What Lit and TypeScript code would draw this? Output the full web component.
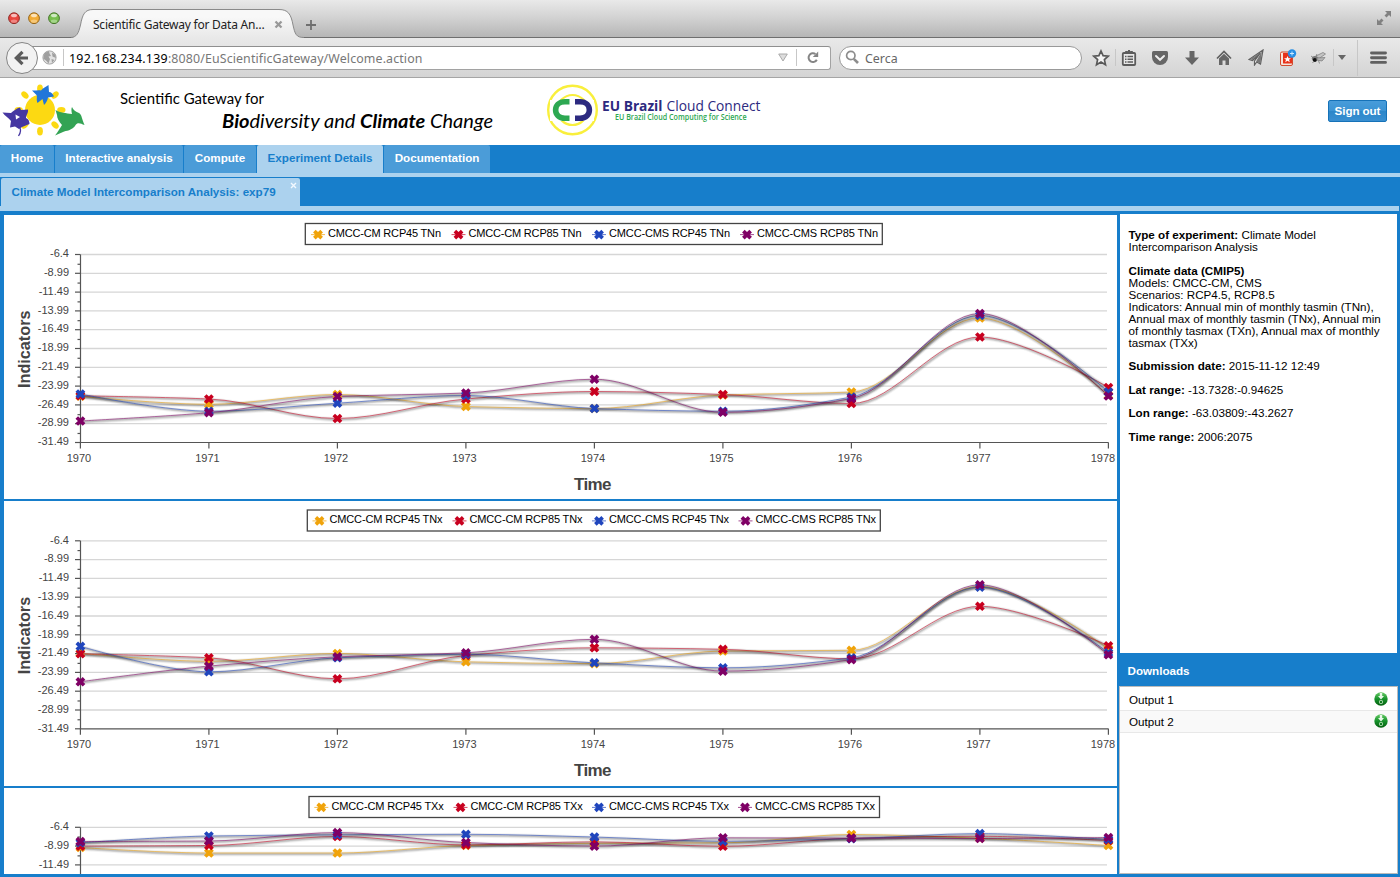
import { LitElement, html, svg, css } from "lit";
import { customElement, property } from "lit/decorators.js";

const COLORS = ["#f0a30a", "#c8001f", "#1f45bd", "#7f0065"];
const YEARS = [1970, 1971, 1972, 1973, 1974, 1975, 1976, 1977, 1978];
const TICKS = ["-6.4", "-8.99", "-11.49", "-13.99", "-16.49", "-18.99", "-21.49", "-23.99", "-26.49", "-28.99", "-31.49"];
const X0 = 76.4;
const DX = 128.5;
const DY = 18.8;
const HANDLE = 1 / 3;

interface ChartSpec {
  suffix: string;
  axisTop: number;
  legendX: number;
  legendY: number;
  legendW: number;
  height: number;
  legendItems: [number, number, number][];
  series: number[][];
}

/* Series values are offsets in pixels below the top grid line. */
const CHARTS: ChartSpec[] = [
  {
    suffix: "TNn", axisTop: 39.5, legendX: 301.3, legendY: 8.5, legendW: 577, height: 284,
    legendItems: [[314, 324, 113], [454.5, 464.5, 113], [595, 605, 121], [743, 753, 121]],
    series: [
      [141.8, 149.8, 140, 152, 154, 140.5, 137.5, 63.5, 141],
      [141.3, 144.5, 164, 144.5, 137, 140, 149, 82.5, 133],
      [139.5, 156.7, 148.7, 141, 154, 156.7, 142.5, 61, 137.5],
      [166.5, 158.2, 142, 138.5, 124.7, 157.8, 144, 59, 141.5],
    ],
  },
  {
    suffix: "TNx", axisTop: 39.8, legendX: 303.3, legendY: 9, legendW: 573, height: 285,
    legendItems: [[315.5, 325.5, 113], [455.5, 465.5, 113], [595, 605, 120], [741.5, 751.5, 120.5]],
    series: [
      [112.5, 120.5, 112.7, 121, 122.8, 110.2, 109.5, 45.7, 108],
      [113, 117, 138, 114.7, 107, 108.5, 118, 65.5, 105],
      [105.5, 131, 117, 113.5, 122, 127, 117, 46.3, 112],
      [141, 125.3, 116, 112, 98.5, 130.3, 118.8, 44, 114],
    ],
  },
  {
    suffix: "TXx", axisTop: 39.3, legendX: 305, legendY: 8.5, legendW: 570.5, height: 86,
    legendItems: [[317.3, 327.5, 112.3], [456.5, 466.5, 112.3], [595, 605, 120], [741, 751, 120]],
    series: [
      [20.2, 25.7, 25.7, 18.2, 16, 15.5, 7.2, 11, 18.2],
      [18.8, 18.2, 9.2, 17.6, 14.5, 19, 11, 9, 13.2],
      [15.5, 8.7, 7.5, 7, 9.7, 14, 11.3, 6.3, 12.2],
      [14.2, 13.7, 5.3, 15.2, 18.8, 10.5, 10.8, 11.2, 10.2],
    ],
  },
];

/* Smooth curve whose tangent is flat at every local extreme. */
function curve(values: number[], top: number): string {
  const n = values.length;
  const tangent = values.map((v, i) => {
    if (i === 0 || i === n - 1) return 0;
    const a = v - values[i - 1];
    const b = values[i + 1] - v;
    return a * b <= 0 ? 0 : (2 * a * b) / (a + b);
  });
  let d = `M${X0} ${top + values[0]}`;
  for (let i = 1; i < n; i++) {
    const xa = X0 + DX * (i - 1);
    const xb = X0 + DX * i;
    const ha = i === 1 ? 0 : HANDLE;
    const hb = i === n - 1 ? 0 : HANDLE;
    const ya = top + values[i - 1] + tangent[i - 1] * ha;
    const yb = top + values[i] - tangent[i] * hb;
    d += `C${xa + DX * ha} ${ya} ${xb - DX * hb} ${yb} ${xb} ${top + values[i]}`;
  }
  return d;
}

const marker = (x: number, y: number, color: string) =>
  svg`<path d="M${x - 2.3} ${y - 2.2}L${x + 2.3} ${y + 2.2}M${x + 2.3} ${y - 2.2}L${x - 2.3} ${y + 2.2}" stroke=${color} stroke-width="3.7" stroke-linecap="square"/>`;

@customElement("line-chart")
class LineChart extends LitElement {
  @property({ attribute: false }) spec!: ChartSpec;

  static styles = css`
    :host { display: block; overflow: hidden; background: #fff; }
    svg { display: block; }
    text { font-family: "Liberation Sans", Arial, sans-serif; font-size: 11px; }
    .tick { fill: #444; }
    .legend { fill: #000; }
    .title { fill: #444; font-size: 17px; font-weight: bold; }
    .ytitle { font-size: 16.5px; }
    .grid { stroke: #d6d6d6; stroke-width: 1.3; }
    .axis { stroke: #555; stroke-width: 1.2; fill: none; }
    .shade { stroke: #000; fill: none; }
    .line { fill: none; stroke-width: 1; opacity: 0.55; }
  `;

  render() {
    const s = this.spec;
    const t = s.axisTop;
    const bottom = t + DY * 10;
    const full = s.height > bottom;
    const ticks = TICKS.filter((_, i) => t + DY * i + 6 < s.height);
    const names = ["CMCC-CM RCP45", "CMCC-CM RCP85", "CMCC-CMS RCP45", "CMCC-CMS RCP85"];
    return html`<svg width="1113" height=${s.height} viewBox=${`0 0 1113 ${s.height}`}>
      <rect x=${s.legendX} y=${s.legendY} width=${s.legendW} height="21" fill="#fff" stroke="#444" stroke-width="1.3"/>
      ${s.legendItems.map(([mx, tx, w], i) => svg`
        <line x1=${mx - 7} x2=${mx + 7} y1=${t - 19.9} y2=${t - 19.9} stroke=${COLORS[i]} opacity="0.7"/>
        ${marker(mx, t - 19.9, COLORS[i])}
        <text class="legend" x=${tx} y=${t - 17.5} textLength=${w}>${names[i]} ${s.suffix}</text>`)}
      ${ticks.map((label, i) => svg`
        ${i < 10 ? svg`<line class="grid" x1="77" x2="1103" y1=${t + DY * i} y2=${t + DY * i}/>
        <line class="axis" x1="73.5" x2="76.5" y1=${t + DY * (i + 0.52)} y2=${t + DY * (i + 0.52)}/>` : ""}
        <line class="axis" x1="71" x2="76.5" y1=${t + DY * i} y2=${t + DY * i}/>
        <text class="tick" x="65" y=${t + DY * i + 2.7} text-anchor="end">${label}</text>`)}
      <path class="axis" d=${full ? `M76.5 ${t}V${bottom}H1104.5` : `M76.5 ${t}V${s.height}`}/>
      ${full ? YEARS.map((y, i) => svg`
        <line class="axis" x1=${X0 + DX * i} x2=${X0 + DX * i} y1=${bottom} y2=${bottom + 6}/>
        <text class="tick" x=${i === 8 ? 1099 : X0 + DX * i - 1.5} y=${bottom + 19.4} text-anchor="middle">${y}</text>`) : ""}
      ${full ? svg`
        <text class="title" x="570" y=${bottom + 47.2} textLength="37.5">Time</text>
        <text class="title ytitle" transform=${`translate(25.7 ${t + 133.5})rotate(-90)`} textLength="77.500" lengthAdjust="spacingAndGlyphs">Indicators</text>` : ""}
      ${s.series.map((v, i) => {
        const d = curve(v, t);
        return svg`
          <path class="shade" d=${d} transform="translate(1 1)" stroke-width="5" opacity="0.05"/>
          <path class="shade" d=${d} transform="translate(1 1)" stroke-width="3" opacity="0.1"/>
          <path class="shade" d=${d} transform="translate(1 1)" stroke-width="1.3" opacity="0.12"/>
          <path class="line" d=${d} stroke=${COLORS[i]}/>`;
      })}
      ${s.series.map((v, i) => v.map((y, k) => marker(X0 + DX * k, t + y, COLORS[i])))}
    </svg>`;
  }
}

@customElement("browser-chrome")
class BrowserChrome extends LitElement {
  static styles = css`
    :host { display: block; height: 78px; font-family: "Noto Sans", "Open Sans", sans-serif; }
    svg { display: block; flex: none; }
    .strip { height: 38px; display: flex; background: linear-gradient(#e9e9e9, #d3d3d3 45%, #b4b4b4); box-shadow: inset 0 -1px #6f6f6f; }
    .lights { display: flex; gap: 8px; padding: 12px 0 0 8px; width: 64px; box-sizing: content-box; }
    .tab { display: grid; width: 238px; margin-left: -1px; }
    .tab > * { grid-area: 1 / 1; }
    .tabrow { display: flex; align-items: center; padding: 10px 0 0 22px; height: 28px; }
    .title { font-size: 12px; color: #222; width: 181px; white-space: nowrap; letter-spacing: -0.23px; }
    .plus { margin: 19px 0 0 -4px; }
    .space { flex: 1; }
    .full { margin: 11px 8px 0 0; }
    .bar { height: 39px; display: flex; align-items: center; background: linear-gradient(#e9e9e9, #d4d4d4); border-bottom: 1px solid #a5a5a5; }
    .back { margin-left: 5px; z-index: 1; }
    .url { height: 22px; width: 799px; margin-left: -9px; display: flex; align-items: center; background: #fff; border: 1px solid #a2a2a2; border-top-color: #8f8f8f; border-radius: 0 3px 3px 0; box-sizing: content-box; flex: none; }
    .globe { margin-left: 11px; }
    .sep { width: 1px; height: 17px; background: #c7c7c7; flex: none; }
    .sep.first { margin-left: 6px; }
    .sep.drop { margin: 0 10px 0 8px; }
    .addr { margin-left: 5px; font-size: 12.4px; color: #777; letter-spacing: 0.12px; white-space: nowrap; line-height: 22px; padding-top: 2px; }
    .host { color: #000; letter-spacing: 0.26px; }
    .reload { margin-right: 11px; }
    .search { height: 22px; width: 241px; border: 1px solid #999; border-radius: 12px; background: #fff; margin-left: 8px; display: flex; align-items: center; gap: 5px; font-size: 12.4px; color: #666; flex: none; }
    .search svg { margin-left: 5px; }
    .search span { padding-top: 1px; }
    .cell { display: flex; justify-content: center; flex: none; }
    .w28 { width: 28px; } .w32 { width: 32px; } .w33 { width: 33px; } .w29 { width: 29px; } .w16 { width: 16px; } .w41 { width: 41px; }
    .star { margin-left: 5px; }
    .tight { margin-right: -1px; }
    .gap { margin-left: 7px; height: 36px; }
  `;

  private light(c: string, d: string) {
    return html`<svg width="12" height="13" viewBox="0 0 12 13">
      <circle cx="6" cy="6.2" r="5.4" fill=${c} stroke=${d}/>
      <ellipse cx="6" cy="3.5" rx="3" ry="1.8" fill="#fff" opacity=".65"/>
      <ellipse cx="6" cy="9.2" rx="3.2" ry="1.6" fill="#fff" opacity=".35"/></svg>`;
  }

  render() {
    return html`
      <div class="strip">
        <div class="lights">${this.light("#e8453f", "#8f2b27")}${this.light("#f2ab34", "#96661a")}${this.light("#76bf4d", "#47752b")}</div>
        <div class="tab">
          <svg width="238" height="38" viewBox="0 0 238 38">
            <defs><linearGradient id="tg" x1="0" y1="0" x2="0" y2="1"><stop offset="0.25" stop-color="#f8f8f8"/><stop offset="1" stop-color="#e8e8e8"/></linearGradient></defs>
            <path d="M-1 38C6 37.500 7.500 33 9.500 25C11.500 14 14 9.500 22 9.500H208C217 9.500 220 14 222 25C224 34 225 37.500 233 37.500V39H-1Z" fill="url(#tg)"/>
            <path d="M-1 37.500C6 37.500 7.500 33 9.500 25C11.500 14 14 9.500 22 9.500H208C217 9.500 220 14 222 25C224 34 225 37.500 233 37.500" fill="none" stroke="#8a8a8a"/>
          </svg>
          <div class="tabrow">
            <span class="title">Scientific Gateway for Data An…</span>
            <svg width="9" height="9" viewBox="0 0 9 9"><path d="M1.500 1.500L7.500 7.500M7.500 1.500L1.500 7.500" stroke="#999" stroke-width="2.300"/></svg>
          </div>
        </div>
        <svg class="plus" width="12" height="12" viewBox="0 0 12 12"><path d="M6 1V11M1 6H11" stroke="#6f6f6f" stroke-width="1.800"/></svg>
        <div class="space"></div>
        <svg class="full" width="15" height="15" viewBox="0 0 15 15" fill="#818181"><path d="M8 0H14V6L12 4L9.500 6.500L7.500 4.500L10 2Z"/><path d="M0 8L2 10L4.500 7.500L6.500 9.500L4 12L6 14H0Z"/></svg>
      </div>
      <div class="bar">
        <svg class="back" width="34" height="34" viewBox="0 0 34 34">
          <circle cx="17" cy="17" r="15.500" fill="#f2f2f2" stroke="#858585"/>
          <path d="M17.500 10.800L11.300 17L17.500 23.200M11.500 17H23" fill="none" stroke="#5c5c5c" stroke-width="3.200"/>
        </svg>
        <div class="url">
          <svg class="globe" width="15" height="15" viewBox="0 0 15 15"><circle cx="7.500" cy="7.500" r="6.600" fill="#e2e2e2" stroke="#a6a6a6"/>
            <path d="M2.500 3L7 1L7.500 3.500L9 6L6.500 6.500L8 9L6.500 13.500L4.500 11L1.200 8.500Z M10 2.500L13 4.500L14 8L10.500 6.500Z M9.500 9L12.500 10L10 13Z" fill="#9f9f9f"/></svg>
          <div class="sep first"></div>
          <div class="addr"><span class="host">192.168.234.139</span>:8080/EuScientificGateway/Welcome.action</div>
          <div class="space"></div>
          <svg width="10" height="9" viewBox="0 0 10 9"><path d="M0.700 1H9.300L5 8Z" fill="#ddd" stroke="#aaa"/></svg>
          <div class="sep drop"></div>
          <svg class="reload" width="12" height="13" viewBox="0 0 12 13"><path d="M9.800 8.800A4.400 4.400 0 1 1 8.500 3" fill="none" stroke="#858585" stroke-width="2"/><path d="M5.800 6H11.200V0.600Z" fill="#858585"/></svg>
        </div>
        <div class="search">
          <svg width="15" height="15" viewBox="0 0 15 15"><circle cx="5.800" cy="5.500" r="4.200" fill="none" stroke="#8d8d8d" stroke-width="1.700"/><path d="M8.800 8.800L13 13" stroke="#8d8d8d" stroke-width="2.600"/></svg>
          <span>Cerca</span>
        </div>
        <div class="cell w28 star"><svg width="18" height="18" viewBox="0 0 18 18"><path d="M9 2L11.100 6.700L16.200 7.200L12.400 10.600L13.500 15.700L9 13L4.500 15.700L5.600 10.600L1.800 7.200L6.900 6.700Z" fill="#f3f3f3" stroke="#595959" stroke-width="1.700"/></svg></div>
        <div class="sep tight"></div>
        <div class="cell w28"><svg width="16" height="18" viewBox="0 0 16 18"><rect x="1.800" y="4" width="12.400" height="12" rx="1" fill="#e8e8e8" stroke="#5c5c5c" stroke-width="1.800"/><path d="M4.500 4V2.500H6.500L8 1L9.500 2.500H11.500V4Z" fill="#5c5c5c" stroke="#5c5c5c"/><path d="M4 7.500H5.500M6.500 7.500H12M4 10.200H5.500M6.500 10.200H12M4 12.900H5.500M6.500 12.900H12" stroke="#5c5c5c" stroke-width="1.500"/></svg></div>
        <div class="cell w33"><svg width="18" height="16" viewBox="0 0 18 16"><path d="M2.500 1H15.500Q17 1 17 2.500V7A8 8 0 0 1 1 7V2.500Q1 1 2.500 1Z" fill="#666"/><path d="M5 6L9 9.800L13 6" fill="none" stroke="#eee" stroke-width="2" stroke-linecap="round"/></svg></div>
        <div class="cell w32"><svg width="16" height="16" viewBox="0 0 16 16"><path d="M5.500 1H10.500V7.500H15L8 15L1 7.500H5.500Z" fill="#666"/></svg></div>
        <div class="cell w32"><svg width="16" height="16" viewBox="0 0 16 16"><path d="M1 8.500L8 1.500L15 8.500" fill="none" stroke="#606060" stroke-width="1.700"/><path d="M3 8.500L8 3.800L13 8.500V15H9.500V10.500H6.500V15H3Z" fill="#666"/></svg></div>
        <div class="cell w32"><svg width="16" height="17" viewBox="0 0 16 17"><path d="M15 1L1 10.500L4.500 11.500L12.500 4L6.500 12V16L8.700 13L12.500 15Z" fill="#eee" stroke="#606060" stroke-width="1.200"/><path d="M14 2L12.500 14.500L8 12.500Z M13 3L4.500 11L2 10.200Z" fill="#777"/></svg></div>
        <div class="cell w32"><svg width="18" height="18" viewBox="0 0 18 18"><rect x="1.500" y="3" width="12" height="13.500" rx="1.500" fill="#f5e5dc" stroke="#d24b2e"/><path d="M4 4H13V14.500H4Z" fill="#e8321a"/><path d="M8.500 7L9.500 9.300H12L10 10.800L10.800 13.300L8.500 11.800L6.200 13.300L7 10.800L5 9.300H7.500Z" fill="#fff"/><circle cx="13" cy="4.500" r="4.200" fill="#2990e5"/><path d="M13 2.500V6.500M11 4.500H15" stroke="#cfe9ff"/></svg></div>
        <div class="cell w29"><svg width="17" height="14" viewBox="0 0 17 14"><ellipse cx="5" cy="7.500" rx="3.200" ry="2.500" fill="#777"/><circle cx="4.800" cy="9" r="2" fill="#111"/><path d="M6 5L13 1.500L15.500 3L9 7.500Z" fill="#c4c4c4" stroke="#777" stroke-width=".7"/><path d="M7 7L15 6.500L12 10L7 9Z" fill="#b5b5b5" stroke="#777" stroke-width=".7"/><path d="M3 6.500L1 5M4 10L2.500 12M8.500 9.500L9.500 12.500M6 5L7 3" stroke="#777" stroke-width=".8"/></svg></div>
        <div class="sep"></div>
        <div class="cell w16"><svg width="8" height="5" viewBox="0 0 8 5"><path d="M0 0H8L4 5Z" fill="#666"/></svg></div>
        <div class="sep gap"></div>
        <div class="cell w41"><svg width="17" height="15" viewBox="0 0 17 15"><path d="M1.500 3H15.500M1.500 7.700H15.500M1.500 12.400H15.500" stroke="#606060" stroke-width="2.900" stroke-linecap="round"/></svg></div>
      </div>`;
  }
}

@customElement("app-root")
class AppRoot extends LitElement {
  static styles = css`
    :host { display: flex; flex-direction: column; width: 1400px; height: 877px; overflow: hidden; background: #fff; font-family: "Liberation Sans", Arial, sans-serif; font-size: 11.65px; color: #000; }
    * { box-sizing: border-box; }
    svg { display: block; flex: none; }
    .header { height: 67px; flex: none; display: flex; justify-content: space-between; padding-right: 13px; }
    .signout { width: 59px; height: 22px; margin-top: 22px; border: 1px solid #1672b8; border-radius: 2px; background: linear-gradient(#489cda, #3b93d3 50%, #2c87ca 52%, #398fd1); color: #fff; font: bold 11.65px "Liberation Sans", Arial, sans-serif; padding: 0 0 1px; white-space: nowrap; letter-spacing: -0.1px; }
    .nav { height: 28px; flex: none; display: flex; gap: 1px; background: #177ecb; color: #fff; font-weight: bold; }
    .nav div { display: flex; justify-content: center; background: #4b9cd8; line-height: 26px; border-radius: 2px 2px 0 0; white-space: nowrap; }
    .nav .on { background: #acd2ee; color: #177ecb; }
    .t1 { width: 54px; } .t2 { width: 128px; } .t3 { width: 72px; } .t4 { width: 126px; } .t5 { width: 106px; }
    .light { height: 4px; flex: none; background: #acd2ee; }
    .sub { height: 29px; flex: none; background: #177ecb; padding: 1px 0 0 1px; }
    .subtab { width: 299px; height: 28px; background: #acd2ee; border-radius: 2px 2px 0 0; display: flex; justify-content: space-between; padding: 0 3px 0 10.5px; font-weight: bold; color: #177ecb; line-height: 28px; white-space: nowrap; }
    .subtab svg { margin-top: 4px; }
    .underline { height: 5px; flex: none; background: #177ecb; padding-right: 1px; }
    .underline div { height: 5px; background: #acd2ee; }
    .main { flex: 1; min-height: 0; display: flex; background: #177ecb; padding: 3px 3px 3px 4px; gap: 3px; }
    .charts { width: 1113px; display: flex; flex-direction: column; gap: 2px; padding-top: 1px; }
    .chart { height: 284px; flex: none; }
    .chart.mid { height: 285px; }
    .chart.last { flex: 1 1 0; height: auto; min-height: 0; }
    .side { width: 277px; display: flex; flex-direction: column; }
    .info { height: 439px; background: #fff; padding: 15px 8.5px 0; line-height: 12px; white-space: nowrap; }
    .info p { margin: 0 0 11.6px; }
    .dlhead { height: 33px; line-height: 35px; color: #fff; font-weight: bold; padding-left: 7.5px; }
    .dl { flex: 1; background: #fff; border: 1px solid #bbb; margin: 0 -1px 0 -1px; }
    .row { display: flex; justify-content: space-between; align-items: center; padding: 1px 9px 0; border-bottom: 1px solid #e8e8e8; height: 24px; }
    .row.alt { background: #f9f9f9; height: 22px; padding: 0 9px 1px; }
    .brand { font-family: Lato, "Open Sans", sans-serif; }
    .eu { font-family: "Open Sans", "Noto Sans", sans-serif; }
  `;

  private download = () => html`<svg width="14" height="14" viewBox="0 0 14 14">
    <defs><linearGradient id="g" x1="0" y1="0" x2="0" y2="1"><stop offset="0" stop-color="#68cb67"/><stop offset=".5" stop-color="#16922b"/><stop offset="1" stop-color="#04600f"/></linearGradient></defs>
    <circle cx="7" cy="7" r="6.700" fill="url(#g)"/><path d="M5.800 1H8.200V4H10L7 7.500L4 4H5.800Z" fill="#e9f8e9"/><rect x="5.500" y="8.500" width="3" height="3" rx=".7" fill="none" stroke="#b5dfb5"/></svg>`;

  render() {
    const rays = [0, 45, 90, 135, 180, 225, 270, 315];
    return html`
      <browser-chrome></browser-chrome>
      <div class="header">
        <svg width="780" height="67" viewBox="0 78 780 67">
          ${rays.map((a) => svg`<ellipse cx="40" cy="88.700" rx="2.900" ry="4.200" fill="#fcd912" transform=${`rotate(${a} 40 110)`}/>`)}
          <circle cx="40" cy="110" r="15" fill="#fcd912"/>
          <path d="M32 90.500C35 91 38 89.500 41 90.500C43 88 46 86.500 48.500 85L49 92C51 92 53 94 54 96.500L48 97.500C47.500 100 46.500 102.500 44 105L42.500 99L37.500 103C36 100 37.500 96.500 36.500 95Z" fill="#2176d9"/>
          <path d="M2.500 112.500L11 113C13.500 111 17 108 20 107.500L21 110L28 109.500C28.500 113 26 115 26 118C28.500 119 29.500 121 29.500 124L22 127L19 129L15 126.500L10 127.500L11 121C9 118 5 116 2.500 112.500Z" fill="#4637a2"/>
          <path d="M15.500 114.500L20 117L16 119.500Z" fill="#fff"/>
          <path d="M19.500 127Q22 131 18.500 136" fill="none" stroke="#4637a2" stroke-width="1.300"/>
          <path d="M55.500 110C60 113 66 113 72 114C71.500 111.500 71 109 72 107C73 110 76 112 79 113C82 115 81.500 118 84.500 125C81 123.500 78 122 76 124.500C72 131 66 130.500 63 132L55 135.500C58 132 60 128 62 125C59 122 57 118 57 115Z" fill="#33a354"/>
          <g class="brand">
            <text x="120" y="104" font-size="15.500" textLength="144" lengthAdjust="spacingAndGlyphs">Scientific Gateway for</text>
            <text x="222" y="127.500" font-size="19.500" font-style="italic" textLength="271" lengthAdjust="spacingAndGlyphs"><tspan font-weight="bold">Bio</tspan>diversity and <tspan font-weight="bold">Climate</tspan> Change</text>
          </g>
          <circle cx="572.500" cy="110" r="24.300" fill="none" stroke="#f9ef3c" stroke-width="2.400"/>
          <circle cx="572.500" cy="110" r="15" fill="none" stroke="#f9ef3c" stroke-width="2.200"/>
          <rect x="550" y="100" width="44" height="21" fill="#fff"/>
          <path d="M569.500 101.800H565C552.500 101.800 552.500 118.200 565 118.200H569.500" fill="none" stroke="#2da852" stroke-width="5.600"/>
          <path d="M575 101.800H580C592.500 101.800 592.500 118.200 580 118.200H575" fill="none" stroke="#2d2a80" stroke-width="5.600"/>
          <g class="eu">
            <text x="602" y="110.500" font-size="14" fill="#2d2a80" font-weight="bold" textLength="60.500" lengthAdjust="spacingAndGlyphs">EU Brazil</text>
            <text x="666.500" y="110.500" font-size="14" fill="#2d2a80" textLength="94" lengthAdjust="spacingAndGlyphs">Cloud Connect</text>
            <text x="615" y="120" font-size="8" font-weight="600" fill="#2da852" textLength="131.500" lengthAdjust="spacingAndGlyphs">EU Brazil Cloud Computing for Science</text>
          </g>
        </svg>
        <button class="signout">Sign out</button>
      </div>
      <div class="nav"><div class="t1">Home</div><div class="t2">Interactive analysis</div><div class="t3">Compute</div><div class="t4 on">Experiment Details</div><div class="t5">Documentation</div></div>
      <div class="light"></div>
      <div class="sub"><div class="subtab">Climate Model Intercomparison Analysis: exp79
        <svg width="7" height="7" viewBox="0 0 7 7"><path d="M1 1L6 6M6 1L1 6" stroke="#f2f9ff" stroke-width="1.400"/></svg></div></div>
      <div class="underline"><div></div></div>
      <div class="main">
        <div class="charts">
          <line-chart class="chart" .spec=${CHARTS[0]}></line-chart>
          <line-chart class="chart mid" .spec=${CHARTS[1]}></line-chart>
          <line-chart class="chart last" .spec=${CHARTS[2]}></line-chart>
        </div>
        <div class="side">
          <div class="info">
            <p><b>Type of experiment:</b> Climate Model<br>Intercomparison Analysis</p>
            <p><b>Climate data (CMIP5)</b><br>Models: CMCC-CM, CMS<br>Scenarios: RCP4.5, RCP8.5<br>Indicators: Annual min of monthly tasmin (TNn),<br>Annual max of monthly tasmin (TNx), Annual min<br>of monthly tasmax (TXn), Annual max of monthly<br>tasmax (TXx)</p>
            <p><b>Submission date:</b> 2015-11-12 12:49</p>
            <p><b>Lat range:</b> -13.7328:-0.94625</p>
            <p><b>Lon range:</b> -63.03809:-43.2627</p>
            <p><b>Time range:</b> 2006:2075</p>
          </div>
          <div class="dlhead">Downloads</div>
          <div class="dl">
            <div class="row">Output 1 ${this.download()}</div>
            <div class="row alt">Output 2 ${this.download()}</div>
          </div>
        </div>
      </div>`;
  }
}
